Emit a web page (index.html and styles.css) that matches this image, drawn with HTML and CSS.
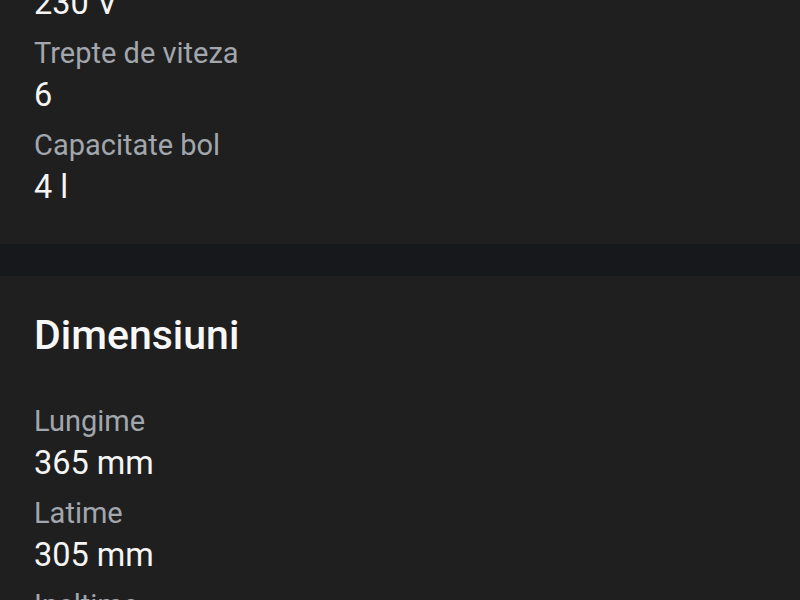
FILE: index.html
```html
<!DOCTYPE html>
<html lang="ro">
<head>
  <meta charset="UTF-8">
  <meta name="viewport" content="width=device-width, initial-scale=1.0">
  <title>Specificatii</title>
  <link rel="stylesheet" href="styles.css">
</head>
<body>

<div class="page">
  <section class="card card-top">
    <dl class="specs">
      <div class="spec spec-first">
        <dd>230 V</dd>
      </div>
      <div class="spec">
        <dt>Trepte de viteza</dt>
        <dd>6</dd>
      </div>
      <div class="spec">
        <dt>Capacitate bol</dt>
        <dd>4 l</dd>
      </div>
    </dl>
  </section>

  <section class="card">
    <h2>Dimensiuni</h2>
    <dl class="specs">
      <div class="spec">
        <dt>Lungime</dt>
        <dd>365 mm</dd>
      </div>
      <div class="spec">
        <dt>Latime</dt>
        <dd>305 mm</dd>
      </div>
      <div class="spec">
        <dt>Inaltime</dt>
        <dd>355 mm</dd>
      </div>
    </dl>
  </section>
</div>

</body>
</html>
```

FILE: styles.css
```css
body { margin: 0; font-family: Roboto, "Noto Sans", sans-serif; background: #17181b; color: #f5f5f5; overflow: hidden; }
.page { display: flex; flex-direction: column; gap: 32px; }
.card { background: #1f1f1f; padding: 35px 34px 35px; }
.card-top { padding-top: 0; }
h2 { margin: 0 0 42px; font-size: 41px; line-height: 48px; font-weight: 500; color: #f7f7f7; }
.specs { margin: 0; display: flex; flex-direction: column; gap: 8px; }
.spec-first { margin-top: -19px; }
.spec dt { font-size: 29px; line-height: 40px; color: #a2a6ad; }
.spec dd { margin: 0; font-size: 32.5px; line-height: 44px; color: #f5f5f5; }
```
